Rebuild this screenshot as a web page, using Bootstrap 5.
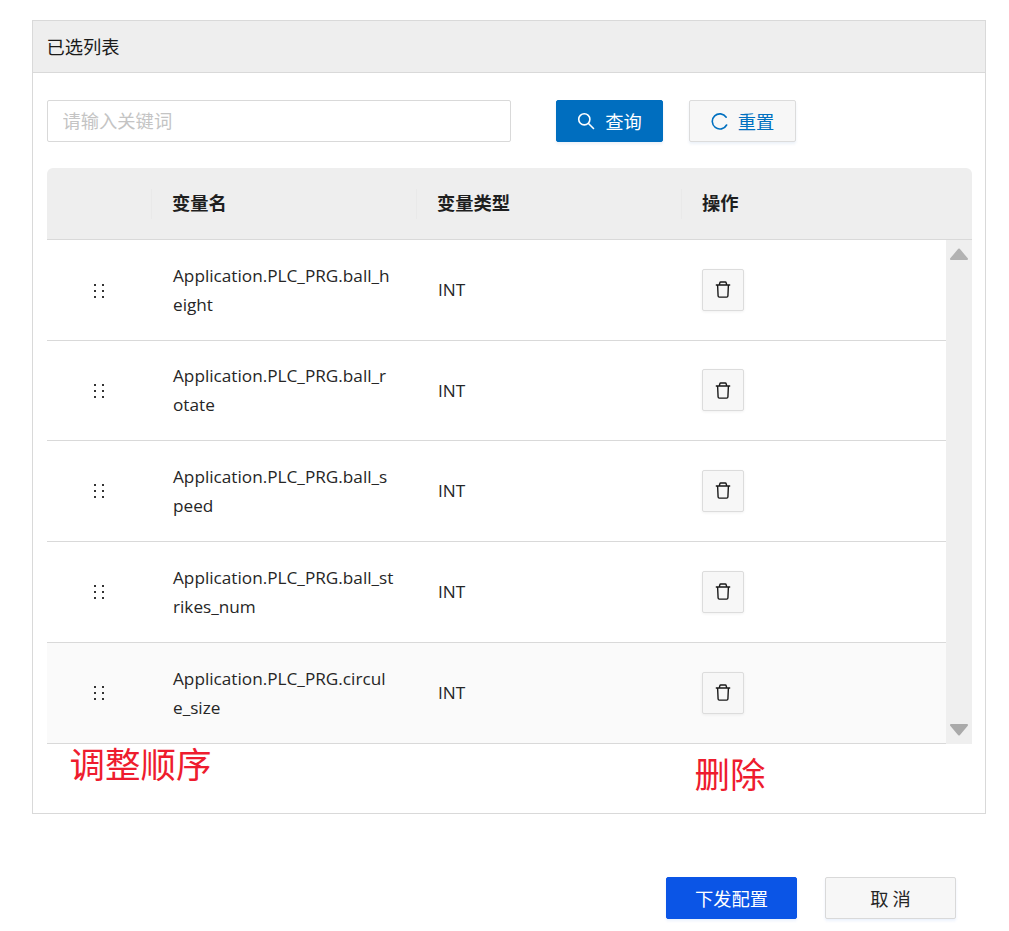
<!DOCTYPE html>
<html lang="zh-CN">
<head>
<meta charset="utf-8">
<title>已选列表</title>
<link href="https://cdn.jsdelivr.net/npm/bootstrap@5.3.0/dist/css/bootstrap.min.css" rel="stylesheet">
<style>
html,body{background:#fff}
body{font-family:"Open Sans","Noto Sans CJK SC",sans-serif;color:#262626;font-size:18px;height:931px;overflow:hidden}
.shell{padding:20px 23px 0 32px}
.panel{border:1px solid #d9d9d9;border-radius:0;height:794px}
.panel-head{background:#eee;border-bottom:1px solid #d9d9d9;height:52px;padding:0 13.5px;line-height:50px;font-size:18.3px;color:#1a1a1a;font-family:"Noto Sans CJK SC",sans-serif}
.panel-body{padding:27px 13px 0 14px}
.kw{width:464px;height:42px;border:1px solid #d9d9d9;border-radius:2px;font-size:18.3px;padding:0 14.5px 2px;font-family:"Noto Sans CJK SC",sans-serif;box-shadow:none}
.kw::placeholder{color:#c4c4c4}
.act{height:42px;width:107px;border-radius:2px;font-size:18.3px;display:inline-flex;align-items:center;justify-content:center;gap:10px;padding:0;font-family:"Noto Sans CJK SC",sans-serif;box-shadow:0 2px 3px rgba(0,80,160,.08)}
.act span{padding-top:2px}
.act-blue{background:#006ebf;border:1px solid #006ebf;color:#fff}
.act-plain{background:#f7f7f7;border:1px solid #dcdcdc;color:#0070c0}
.bar-gap{gap:45px;margin-bottom:26px}
.bar-gap .act-plain{margin-left:-19px}
.grid-head{background:#eee;border-radius:6px 6px 0 0;border-bottom:1px solid #d9d9d9;height:72px;width:925px;table-layout:fixed;border-collapse:separate;border-spacing:0}
.grid-head th{font-weight:700;font-size:18.3px;color:#1f1f1f;padding:0 0 2px 20px;font-family:"Noto Sans CJK SC",sans-serif;position:relative;background:transparent;border:0}
.grid-head th:not(:first-child)::before{content:"";position:absolute;left:-1px;top:21px;height:30px;width:1px;background:#e9e9e9}
.c1{width:105px}.c2{width:265px}.c3{width:265px}
.grid-wrap{width:925px}
.grid-body{width:899px;table-layout:fixed;border-collapse:collapse;margin:0}
.grid-body td{border:0;border-bottom:1px solid #d9d9d9;padding:0 0 0 21px;vertical-align:middle;line-height:29px;font-size:17.2px;color:#262626;background:transparent;box-shadow:none}
.grid-body td.nm{word-break:break-all;padding-right:22px}
.grid-body td.grip{padding:0;text-align:center}
.grid-body td.ops{padding-left:20px}
.grid-body tr{height:101px}
.grid-body tr:nth-child(-n+2){height:100px}
.grid-body tr:last-child td{background:#fafafa}
.grip svg{display:inline-block;margin:0 1px 2px 0}
.trash{width:42px;height:42px;padding:0;background:#f7f7f7;border:1px solid #dcdcdc;border-radius:2px;display:inline-flex;align-items:center;justify-content:center;box-shadow:0 1px 3px rgba(0,0,0,.06)}
.sbar{width:26px;background:#efefef;padding:8px 0;align-items:center}
.note{color:#ee1c2e;font-size:35.5px;line-height:42px;font-family:"Noto Sans CJK SC",sans-serif;font-weight:400}
.note-a{margin:-2px 0 0 22.5px}
.note-b{margin:8px 0 0 483px}
.foot{padding:63px 0 0 0;gap:28px;justify-content:flex-start;margin-left:634px}
.f-btn{width:131px;height:42px;border-radius:2px;font-size:18.3px;padding:2px 0 0;font-family:"Noto Sans CJK SC",sans-serif;box-shadow:0 2px 3px rgba(0,90,230,.08)}
.f-blue{background:#0b55e6;border:1px solid #0b55e6;color:#fff}
.f-plain{background:#f7f7f7;border:1px solid #d9d9d9;color:#262626}
</style>
</head>
<body>
<svg width="0" height="0" class="d-none">
  <symbol id="ic-grip" viewBox="0 0 12 16"><rect x="1" y="1" width="2" height="2"/><rect x="9" y="1" width="2" height="2"/><rect x="1" y="7" width="2" height="2"/><rect x="9" y="7" width="2" height="2"/><rect x="1" y="13" width="2" height="2"/><rect x="9" y="13" width="2" height="2"/></symbol>
  <symbol id="ic-trash" viewBox="0 0 16 17"><path d="M.8 4h14.4M2.6 4l.5 11a1.2 1.2 0 0 0 1.2 1.1h7.4a1.2 1.2 0 0 0 1.2-1.1l.5-11M4.3 4l.5-2.2a1 1 0 0 1 1-.8h4.4a1 1 0 0 1 1 .8l.5 2.2"/></symbol>
</svg>
<div class="shell">
  <div class="card panel">
    <div class="panel-head">已选列表</div>
    <div class="panel-body">
      <div class="d-flex bar-gap">
        <input class="form-control kw" type="text" placeholder="请输入关键词">
        <button type="button" class="btn act act-blue">
          <svg width="18" height="18" viewBox="0 0 18 18" fill="none" stroke="#fff" stroke-width="1.6"><circle cx="7.3" cy="7.3" r="5.6"/><path d="M11.5 11.5l5 5" stroke-linecap="round"/></svg>
          <span>查询</span>
        </button>
        <button type="button" class="btn act act-plain">
          <svg width="17" height="17" viewBox="0 0 17 17" fill="none" stroke="#0070c0" stroke-width="1.6"><path d="M15.2 4.2A7.6 7.6 0 1 0 15.6 12" stroke-linecap="round"/></svg>
          <span>重置</span>
        </button>
      </div>
      <div class="grid-wrap">
        <table class="grid-head">
          <thead><tr><th class="c1"></th><th class="c2">变量名</th><th class="c3">变量类型</th><th>操作</th></tr></thead>
        </table>
        <div class="d-flex">
          <table class="grid-body">
            <colgroup><col class="c1"><col class="c2"><col class="c3"><col></colgroup>
            <tbody>
              <tr><td class="grip"><svg width="12" height="16" fill="#333"><use href="#ic-grip"/></svg></td><td class="nm">Application.PLC_PRG.ball_height</td><td>INT</td><td class="ops"><button type="button" class="trash" aria-label="删除"><svg width="16" height="17" fill="none" stroke="#1a1a1a" stroke-width="1.4"><use href="#ic-trash"/></svg></button></td></tr>
              <tr><td class="grip"><svg width="12" height="16" fill="#333"><use href="#ic-grip"/></svg></td><td class="nm">Application.PLC_PRG.ball_rotate</td><td>INT</td><td class="ops"><button type="button" class="trash" aria-label="删除"><svg width="16" height="17" fill="none" stroke="#1a1a1a" stroke-width="1.4"><use href="#ic-trash"/></svg></button></td></tr>
              <tr><td class="grip"><svg width="12" height="16" fill="#333"><use href="#ic-grip"/></svg></td><td class="nm">Application.PLC_PRG.ball_speed</td><td>INT</td><td class="ops"><button type="button" class="trash" aria-label="删除"><svg width="16" height="17" fill="none" stroke="#1a1a1a" stroke-width="1.4"><use href="#ic-trash"/></svg></button></td></tr>
              <tr><td class="grip"><svg width="12" height="16" fill="#333"><use href="#ic-grip"/></svg></td><td class="nm">Application.PLC_PRG.ball_strikes_num</td><td>INT</td><td class="ops"><button type="button" class="trash" aria-label="删除"><svg width="16" height="17" fill="none" stroke="#1a1a1a" stroke-width="1.4"><use href="#ic-trash"/></svg></button></td></tr>
              <tr><td class="grip"><svg width="12" height="16" fill="#333"><use href="#ic-grip"/></svg></td><td class="nm">Application.PLC_PRG.circule_size</td><td>INT</td><td class="ops"><button type="button" class="trash" aria-label="删除"><svg width="16" height="17" fill="none" stroke="#1a1a1a" stroke-width="1.4"><use href="#ic-trash"/></svg></button></td></tr>
            </tbody>
          </table>
          <div class="sbar d-flex flex-column justify-content-between">
            <svg width="18" height="12" viewBox="0 0 18 12" fill="#b2b2b2" stroke="#b2b2b2" stroke-width="2" stroke-linejoin="round"><path d="M9 1.5L1 11h16z"/></svg>
            <svg width="18" height="12" viewBox="0 0 18 12" fill="#aaa" stroke="#aaa" stroke-width="2" stroke-linejoin="round"><path d="M1 1h16L9 10.5z"/></svg>
          </div>
        </div>
      </div>
      <div class="d-flex">
        <div class="note note-a">调整顺序</div>
        <div class="note note-b">删除</div>
      </div>
    </div>
  </div>
  <div class="d-flex foot">
    <button type="button" class="btn f-btn f-blue">下发配置</button>
    <button type="button" class="btn f-btn f-plain">取 消</button>
  </div>
</div>
<script src="https://cdn.jsdelivr.net/npm/bootstrap@5.3.0/dist/js/bootstrap.bundle.min.js"></script>
</body>
</html>
